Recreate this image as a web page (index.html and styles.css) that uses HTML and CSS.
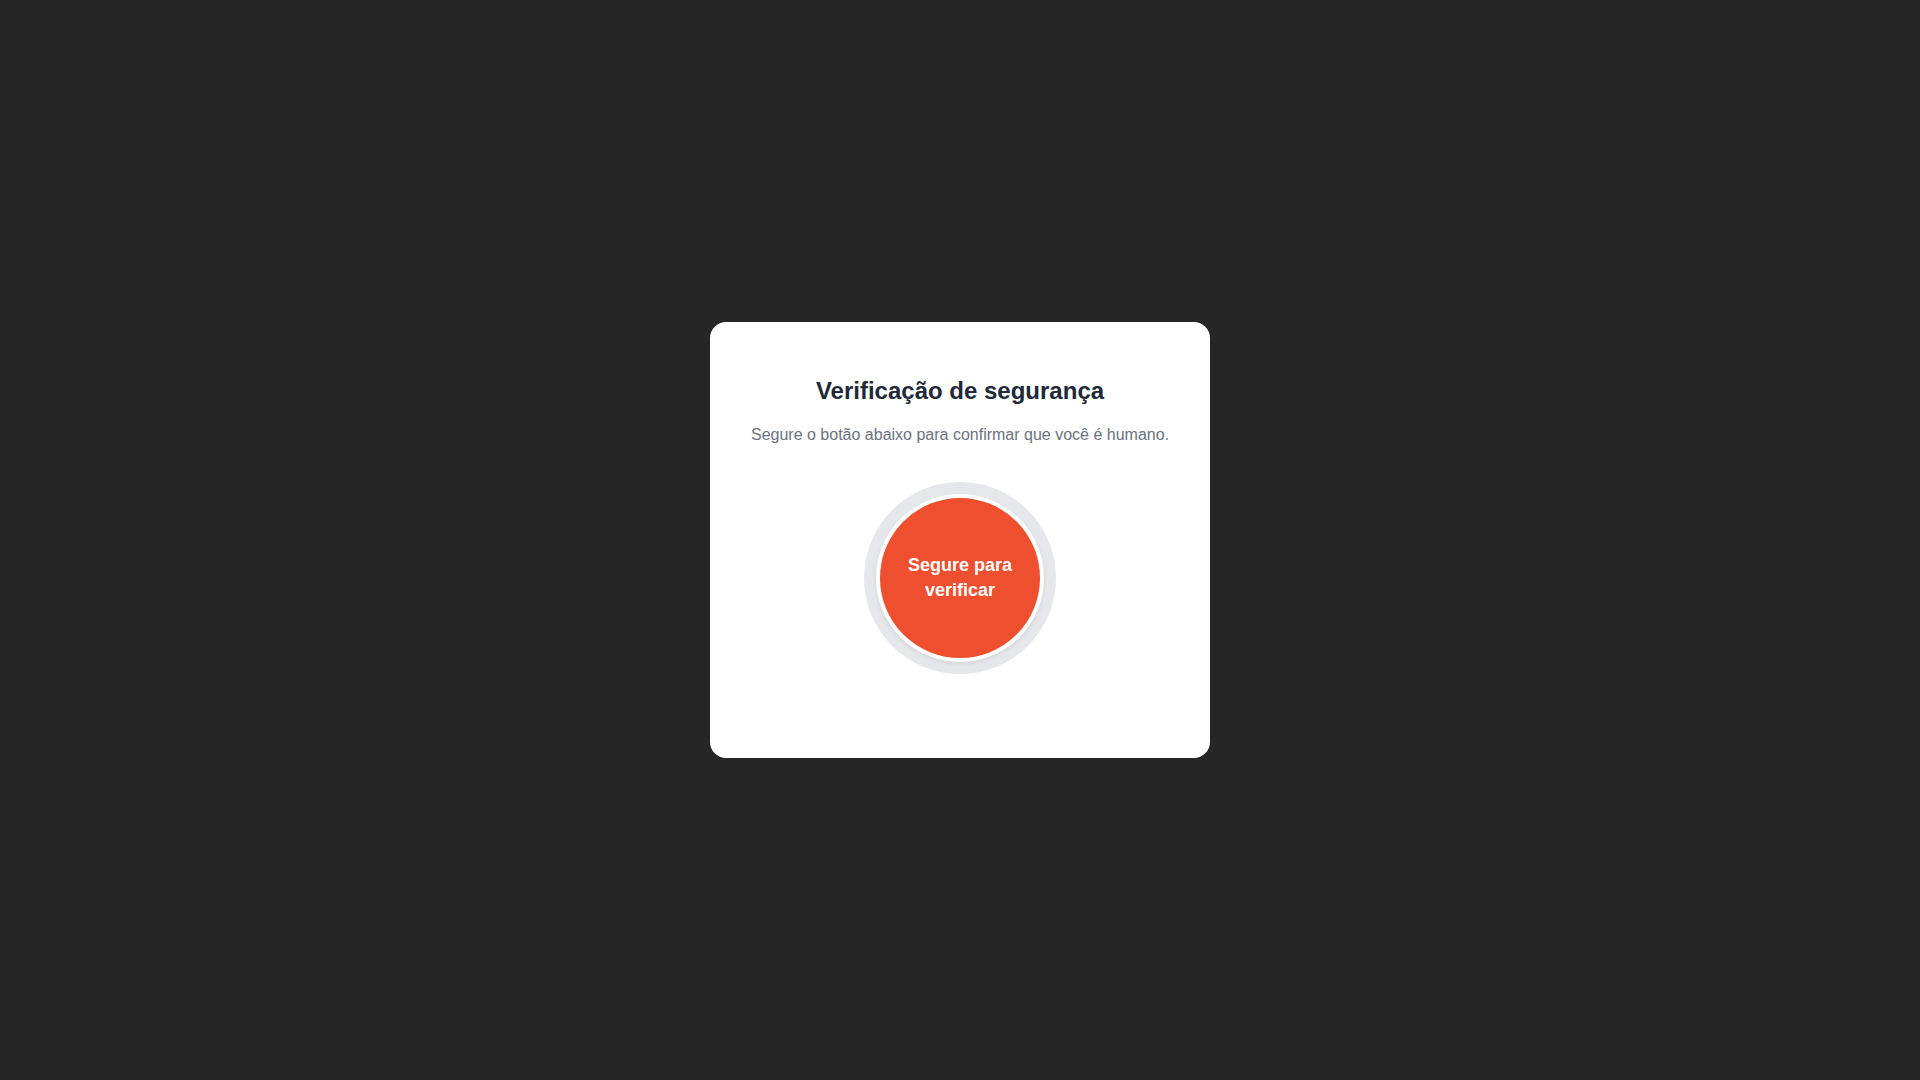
FILE: index.html
```html
<!DOCTYPE html>
<html lang="pt-BR">
<head>
<meta charset="utf-8">
<title>Verificação de segurança</title>
<link rel="stylesheet" href="styles.css">
</head>
<body>
<main class="page">
  <section class="card">
    <h1 class="title">Verificação de segurança</h1>
    <p class="subtitle">Segure o botão abaixo para confirmar que você é humano.</p>
    <div class="ring">
      <button class="hold-btn" type="button">Segure para verificar</button>
    </div>
  </section>
</main>
</body>
</html>
```
FILE: styles.css
```css
* { box-sizing: border-box; }
html, body { margin: 0; padding: 0; }
body {
  background: #262626;
  font-family: "Liberation Sans", Arial, sans-serif;
  width: 1920px;
  height: 1080px;
}
.page {
  width: 100%;
  height: 100%;
  display: flex;
  align-items: center;
  justify-content: center;
}
.card {
  width: 500px;
  background: #ffffff;
  border-radius: 16px;
  padding: 53px 32px 52px;
  display: flex;
  flex-direction: column;
  align-items: center;
  text-align: center;
}
.title {
  margin: 0;
  font-size: 24px;
  line-height: 32px;
  font-weight: 700;
  color: #1f2937;
}
.subtitle {
  margin: 16px 0 0;
  font-size: 16px;
  line-height: 24px;
  color: #6b7280;
}
.ring {
  margin: 35px 0 32px;
  width: 192px;
  height: 192px;
  border-radius: 50%;
  background: #e5e7eb;
  padding: 12px;
  display: flex;
  align-items: center;
  justify-content: center;
}
.hold-btn {
  width: 168px;
  height: 168px;
  border-radius: 50%;
  border: 4px solid #ffffff;
  background: #ed4f2f;
  color: #ffffff;
  font-family: "Liberation Sans", Arial, sans-serif;
  font-size: 18px;
  line-height: 25px;
  font-weight: 700;
  padding: 0 12px;
  box-shadow: 0 2px 4px rgba(0,0,0,0.08);
  cursor: pointer;
}
```
